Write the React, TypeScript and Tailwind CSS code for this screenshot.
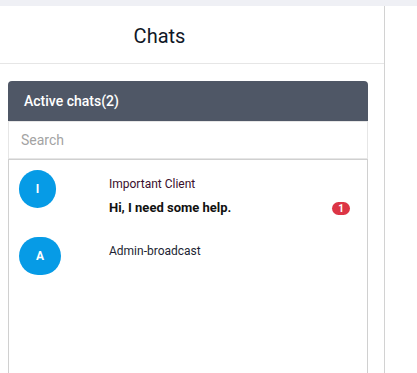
import React from 'react'

interface Chat {
  initial: string
  name: string
  nameColor: string
  message?: string
  unread?: number
  avatarW: string
}

const chats: Chat[] = [
  { initial: 'I', name: 'Important Client', nameColor: 'text-[#3a0f2c]', message: 'Hi, I need some help.', unread: 1, avatarW: 'w-[37px]' },
  { initial: 'A', name: 'Admin-broadcast', nameColor: 'text-[#1c1f33]', avatarW: 'w-[42px]' },
]

function ChatRow({ chat }: { chat: Chat }) {
  return (
    <div className="flex h-[67px] pl-[10px] pr-[17px]">
      <div className="w-[90px] shrink-0">
        <div
          className={`${chat.avatarW} flex h-[38px] items-center justify-center rounded-full bg-[#069be6] text-[12px] font-bold text-white`}
        >
          {chat.initial}
        </div>
      </div>
      <div className="flex-1 pt-[7px]">
        <div className={`text-[12px] leading-[14px] ${chat.nameColor}`}>{chat.name}</div>
        {chat.message && (
          <div className="mt-[10px] flex items-center justify-between">
            <span className="text-[13px] font-bold leading-[14px] text-[#111]">{chat.message}</span>
            {chat.unread ? (
              <span className="flex h-[13px] w-[18px] items-center justify-center rounded-full bg-[#dc3545] text-[10px] font-bold text-white">
                {chat.unread}
              </span>
            ) : null}
          </div>
        )}
      </div>
    </div>
  )
}

export default function App() {
  return (
    <div className="h-[373px] w-[417px] overflow-hidden bg-[#eff0f5] pt-[6px] font-['Roboto',sans-serif]">
      <div className="flex h-full bg-white">
        <div className="flex w-[385px] flex-col overflow-hidden rounded-tl-[6px] border-r border-[#d2d2d2] bg-white">
          {/* Header */}
          <div className="flex h-[58px] shrink-0 items-center justify-center border-b border-[#e6e6e6] pt-[2px] pr-[65px] text-[20px] text-[#111827]">
            Chats
          </div>

          <div className="flex shrink-0 flex-col px-[8px] pt-[17px] pr-[16px]">
            <div className="flex h-[40px] items-center rounded-t-[4px] bg-[#4f5766] px-[16px] text-[14px] font-medium text-white">
              Active chats(2)
            </div>
            <input
              placeholder="Search"
              className="h-[38px] w-full border border-[#e6e6e6] px-[12px] text-[14px] text-[#333] placeholder:text-[#a3a3a3] focus:outline-none"
            />
            <div className="h-[260px] border border-[#d0d0d0] pt-[10px]">
              {chats.map((c) => (
                <ChatRow key={c.name} chat={c} />
              ))}
            </div>
          </div>
        </div>
        <div className="flex-1 bg-white" />
      </div>
    </div>
  )
}
